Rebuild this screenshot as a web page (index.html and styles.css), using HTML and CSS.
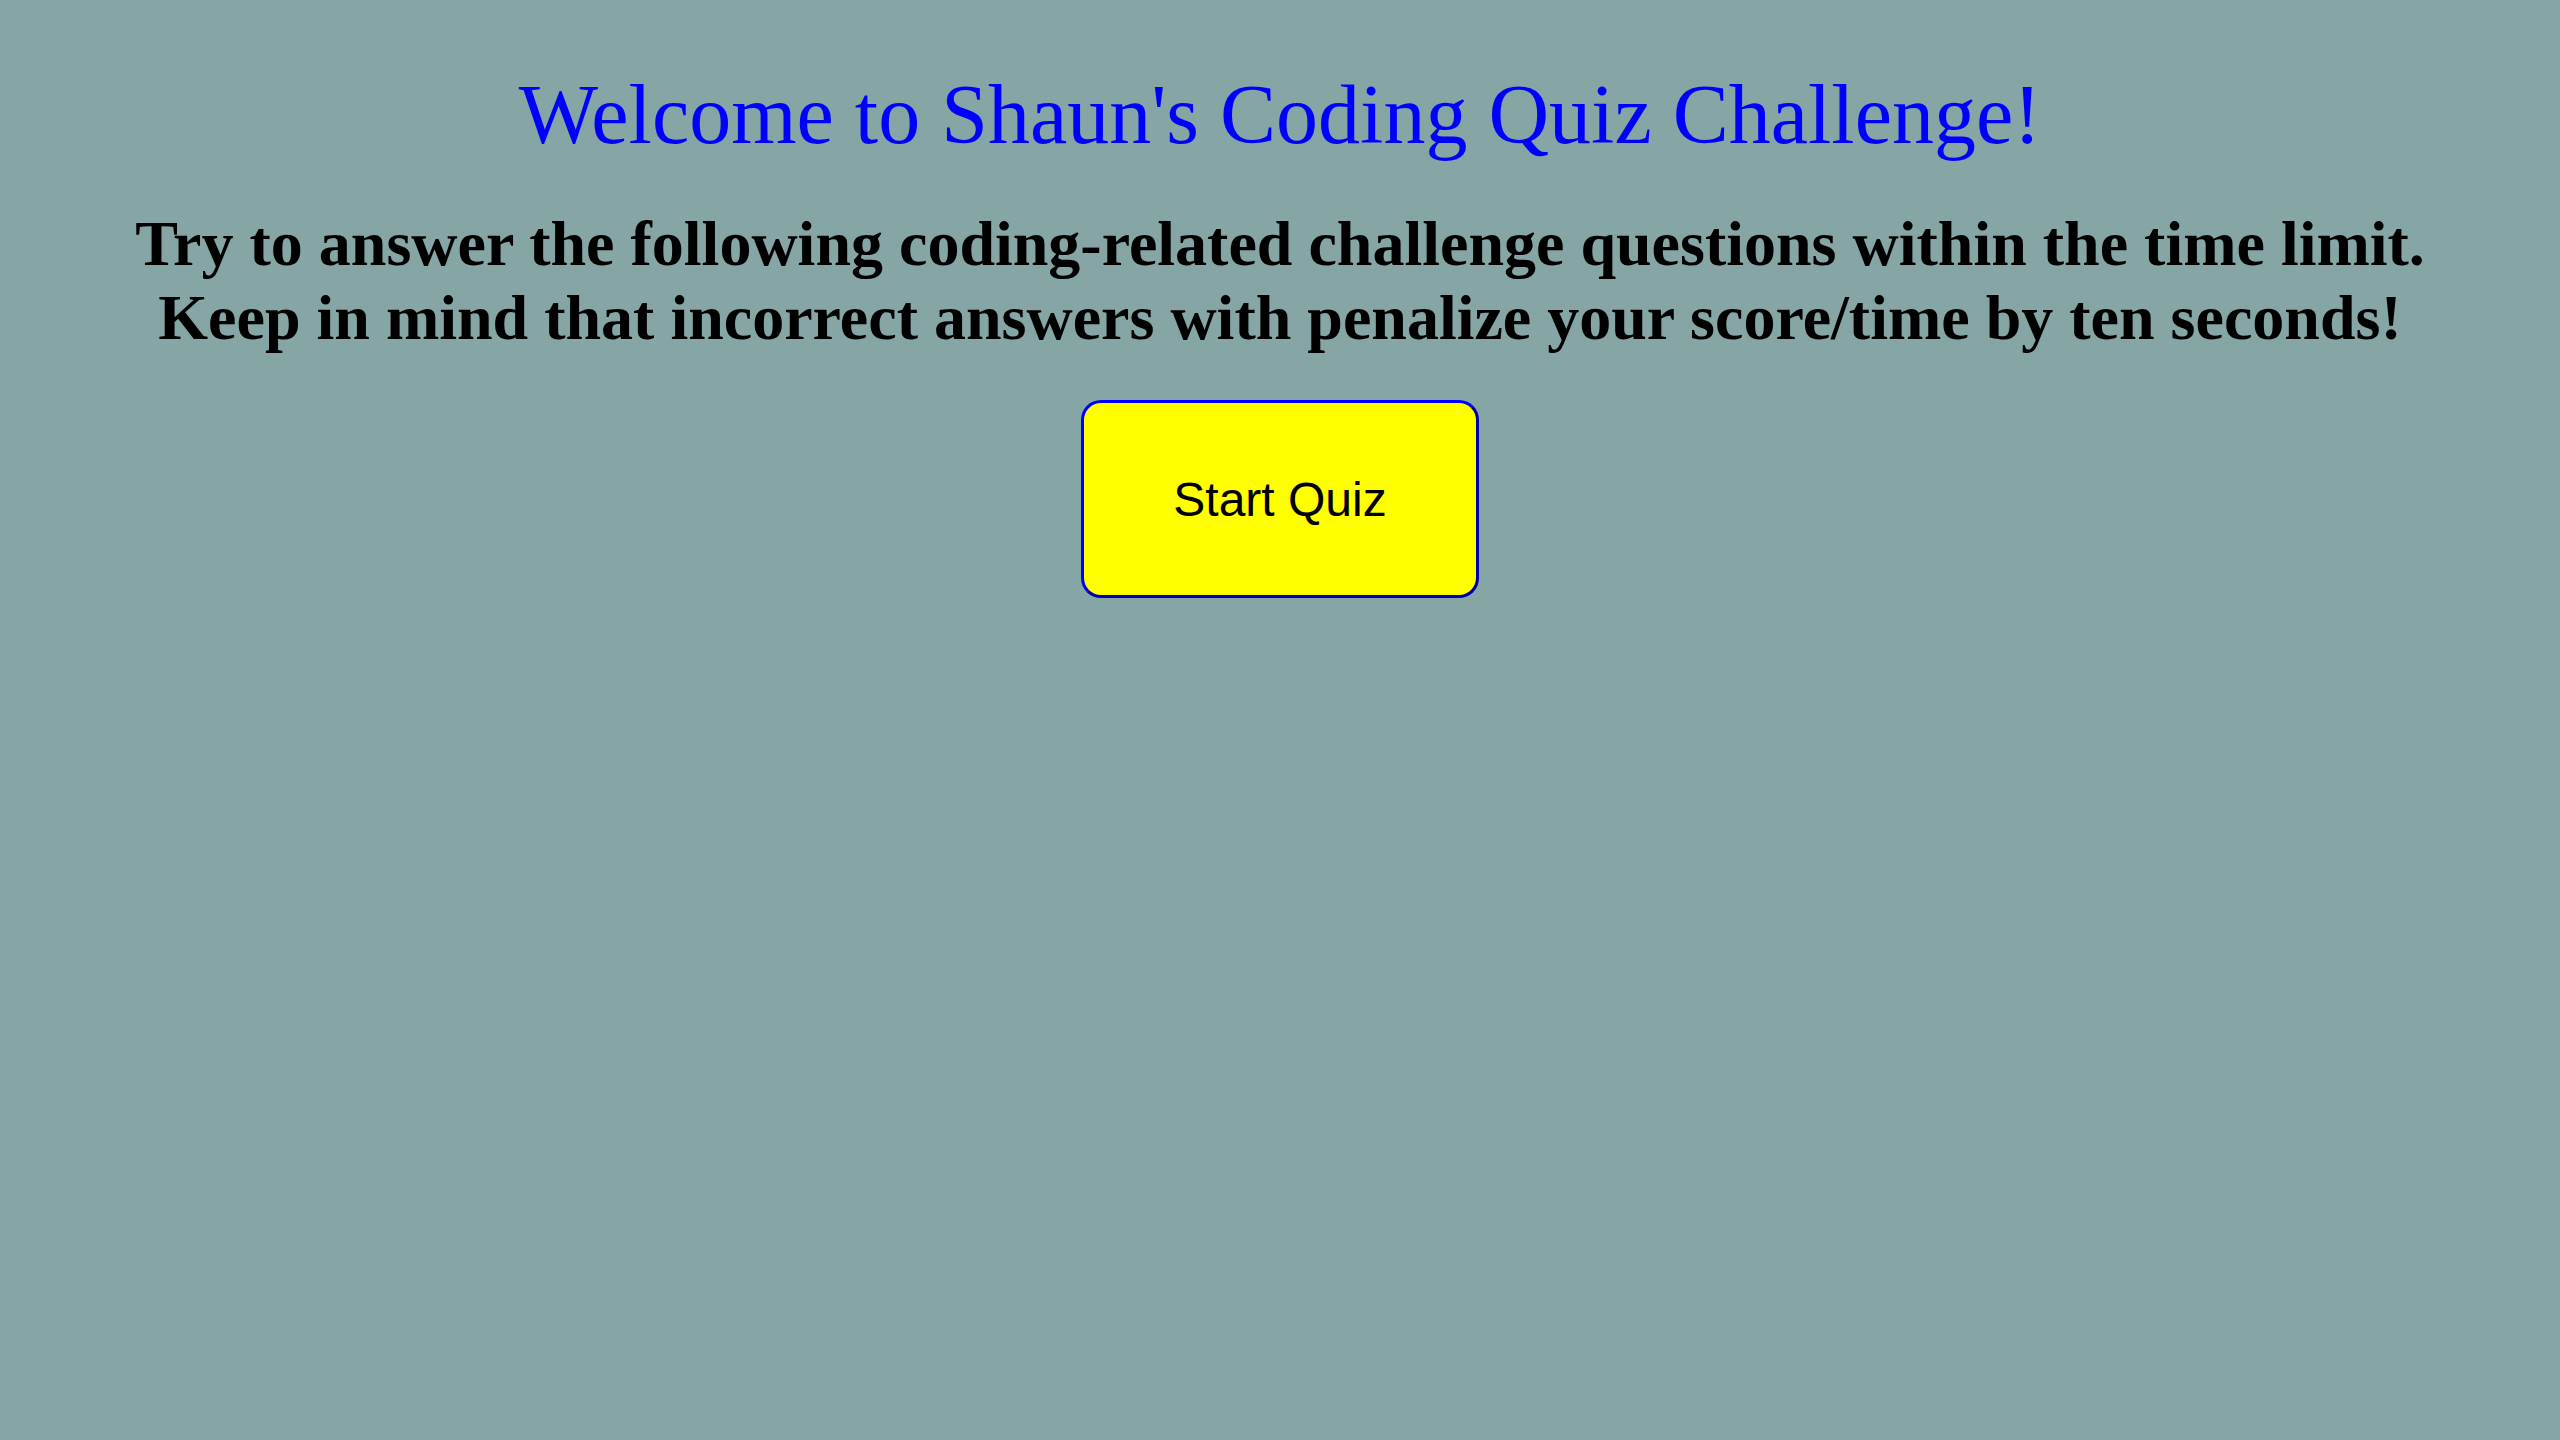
FILE: index.html
```html
<!DOCTYPE html>
<html lang="en">
<head>
<meta charset="utf-8">
<title>Coding Quiz</title>
<link rel="stylesheet" href="styles.css">
</head>
<body>
<main class="intro">
  <h1 class="title">Welcome to Shaun's Coding Quiz Challenge!</h1>
  <h2 class="subtitle">Try to answer the following coding-related challenge questions within the time limit.<br>Keep in mind that incorrect answers with penalize your score/time by ten seconds!</h2>
  <button class="start-btn" type="button">Start Quiz</button>
</main>
</body>
</html>
```

FILE: styles.css
```css
html, body {
  margin: 0;
  padding: 0;
}
body {
  background: #85a6a4;
  min-height: 100vh;
  font-family: "Liberation Serif", "Times New Roman", serif;
}
.intro {
  display: flex;
  flex-direction: column;
  align-items: center;
  text-align: center;
  padding-top: 66px;
}
.title {
  margin: 0;
  font-size: 84px;
  font-weight: normal;
  color: #0000ff;
}
.subtitle {
  margin: 44px 0 0;
  font-size: 64px;
  font-weight: bold;
  color: #000;
}
.start-btn {
  margin-top: 45px;
  width: 398px;
  height: 198px;
  background: #ffff00;
  border: 3px solid;
  border-color: #0000ff #0000a8 #0000a8 #0000ff;
  border-radius: 20px;
  font-family: "Liberation Sans", Arial, sans-serif;
  font-size: 48px;
  color: #000;
  padding: 0;
}
```
